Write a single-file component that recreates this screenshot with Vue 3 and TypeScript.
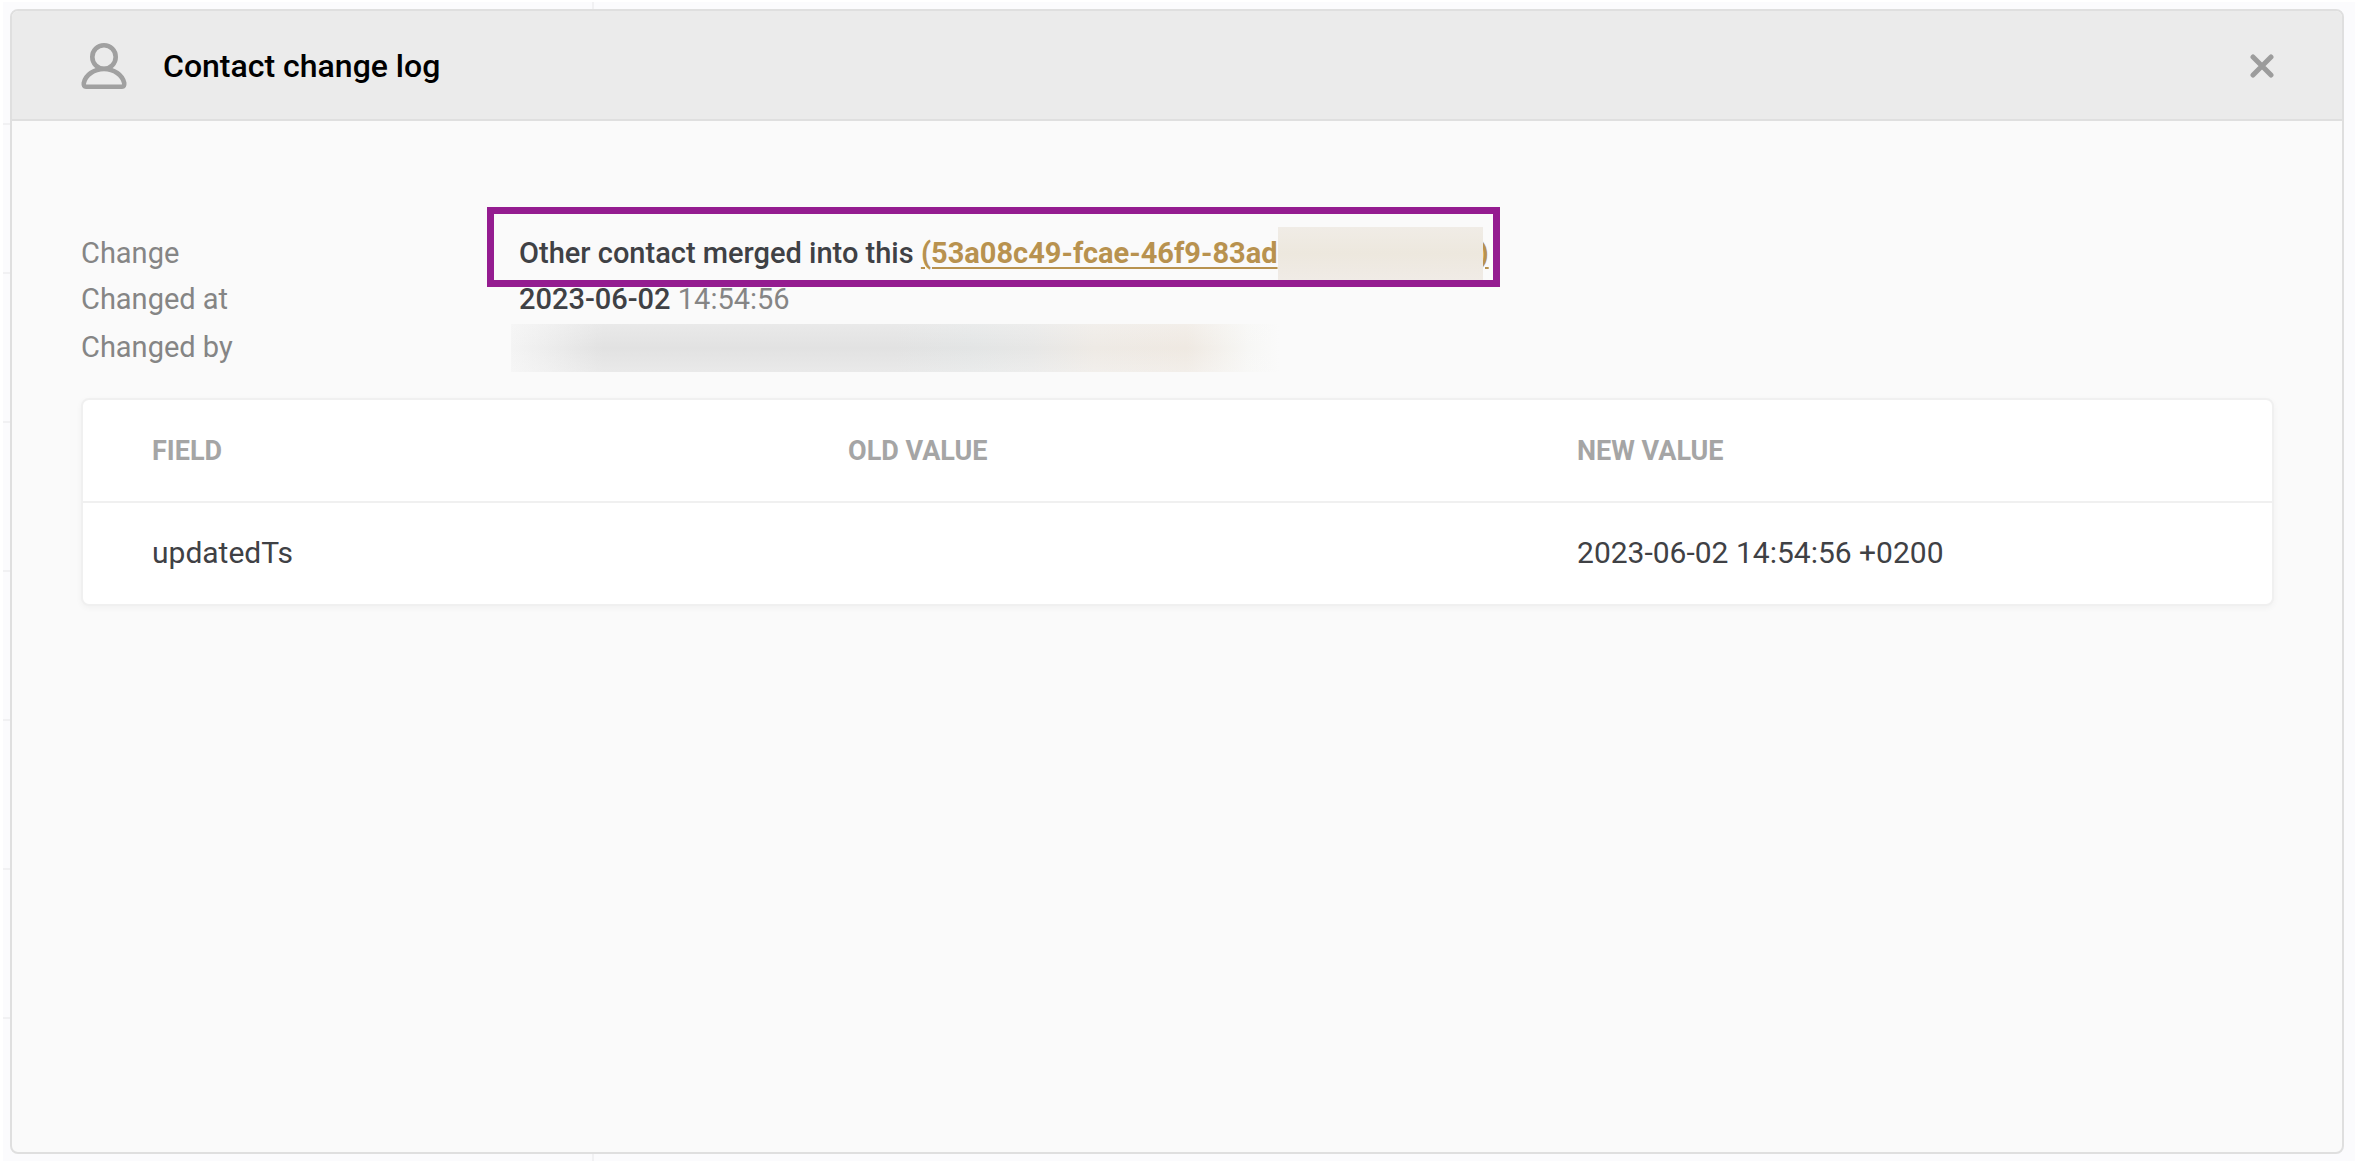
<script setup lang="ts">
interface ChangedField {
  field: string
  oldValue: string
  newValue: string
}

const columns: string[] = ['Field', 'Old value', 'New value']

const changes: ChangedField[] = [
  { field: 'updatedTs', oldValue: '', newValue: '2023-06-02 14:54:56 +0200' },
]
</script>

<template>
  <div class="page">
    <section class="dialog" role="dialog" aria-labelledby="dialog-title">
      <header class="dialog-header">
        <svg class="user-icon" viewBox="0 0 46 46" aria-hidden="true">
          <ellipse cx="23" cy="14" rx="11.7" ry="11.7" />
          <path d="M5 43.7H41Q43.6 43.7 43.2 40C41.5 32 33 26 23 26S4.500 32 2.800 40Q2.400 43.700 5 43.700Z" />
        </svg>
        <h1 id="dialog-title" class="title">Contact change log</h1>
        <button class="close" type="button" aria-label="Close">
          <svg class="close-icon" viewBox="0 0 24 24" aria-hidden="true">
            <path d="M3 3L21 21M21 3L3 21" />
          </svg>
        </button>
      </header>

      <div class="dialog-body">
        <dl class="summary">
          <dt>Change</dt>
          <dd>
            <span class="highlighted">
              <strong>Other contact merged into this </strong>
              <a class="contact-link" href="#">(53a08c49-fcae-46f9-83ad<span class="redacted-id"></span>)</a>
            </span>
          </dd>
          <dt>Changed at</dt>
          <dd><strong>2023-06-02</strong> <span class="time">14:54:56</span></dd>
          <dt>Changed by</dt>
          <dd><span class="redacted-user"></span></dd>
        </dl>

        <div class="card">
          <table class="changes">
            <thead>
              <tr>
                <th v-for="column in columns" :key="column" scope="col">{{ column }}</th>
              </tr>
            </thead>
            <tbody>
              <tr v-for="change in changes" :key="change.field">
                <td>{{ change.field }}</td>
                <td>{{ change.oldValue }}</td>
                <td>{{ change.newValue }}</td>
              </tr>
            </tbody>
          </table>
        </div>
      </div>
    </section>
  </div>
</template>

<style>
body {
  margin: 0;
  background: #fff;
}
</style>

<style scoped>
.page {
  box-sizing: border-box;
  display: flex;
  min-height: 100vh;
  padding: 7px 11px 7px 7px;
  border: solid #fff;
  border-width: 2px 0 3px 3px;
  background:
    linear-gradient(#f1f1f3, #f1f1f3) 589px 0 / 2px 100% no-repeat,
    repeating-linear-gradient(transparent 0 121px, #f1f1f3 121px 123px, transparent 123px 149px) 0 0 / 50% 100% no-repeat,
    #fbfbfd;
  font-family: Roboto, 'Liberation Sans', sans-serif;
  font-size: 29px;
  color: #3f4145;
}

.dialog {
  flex: 1;
  display: flex;
  flex-direction: column;
  border: 2px solid #dfdfdf;
  border-radius: 8px;
  background: #fafafa;
  overflow: hidden;
}

.dialog-header {
  box-sizing: border-box;
  display: flex;
  align-items: center;
  height: 110px;
  padding: 2px 68px 0 69px;
  border-bottom: 2px solid #dfdfdf;
  background: #ebebeb;
}

.user-icon {
  width: 46px;
  height: 46px;
  fill: none;
  stroke: #a0a0a0;
  stroke-width: 4.6;
}

.title {
  flex: 1;
  margin: 0 0 0 36px;
  font-size: 32px;
  font-weight: 500;
  color: #000;
}

.close {
  display: flex;
  padding: 0;
  border: 0;
  background: none;
  cursor: pointer;
}

.close-icon {
  width: 24px;
  height: 24px;
  fill: none;
  stroke: #9c9c9c;
  stroke-width: 5;
  stroke-linecap: round;
}

.dialog-body {
  padding: 109px 68px 40px 69px;
}

.summary {
  display: grid;
  grid-template-columns: 438px 1fr;
  grid-template-rows: 46px 48px 48px;
  margin: 0 0 26px;
  line-height: 47px;
  color: #858585;
}

.summary dd {
  margin: 0;
}

.summary strong {
  font-weight: 500;
  color: #3f4145;
}

.highlighted {
  position: relative;
  display: inline-block;
  white-space: nowrap;
}

.highlighted::after {
  content: '';
  position: absolute;
  inset: -23px -11px -10px -32px;
  border: 7px solid #941c90;
}

.contact-link {
  font-weight: 700;
  color: #b8924f;
  text-decoration: underline;
  text-decoration-thickness: 2px;
  text-underline-offset: 4px;
}

.redacted-id {
  position: relative;
  display: inline-block;
  width: 201px;
}

.redacted-id::after {
  content: '';
  position: absolute;
  top: -36px;
  left: 0;
  width: 205px;
  height: 53px;
  background: linear-gradient(#f0ece6, #ede8de 50%, #f0ebe6);
}

.redacted-user {
  display: block;
  width: 768px;
  height: 48px;
  margin-left: -8px;
  background:
    linear-gradient(rgb(250 250 250 / 30%), transparent 50%, rgb(250 250 250 / 30%)),
    linear-gradient(90deg, #f4f4f4, #e2e2e2 12%, #e2e2e2 50%, #e3e5e5 60%, #e7e7e6 68%, #eeeae5 76%, #efe9e2 88%, #f7f7f5 96%, #fafafa);
}

.card {
  border: 2px solid #f0f0f0;
  border-radius: 8px;
  background: #fff;
  box-shadow: 0 2px 6px rgb(0 0 0 / 4%);
}

.changes {
  width: 100%;
  table-layout: fixed;
  border-collapse: collapse;
}

.changes th,
.changes td {
  box-sizing: border-box;
  height: 102px;
  padding: 0 69px;
  text-align: left;
}

.changes th {
  border-bottom: 2px solid #f0f0f0;
  font-size: 27px;
  font-weight: 700;
  text-transform: uppercase;
  color: #a5a5a5;
}

.changes td {
  padding-bottom: 2px;
  font-size: 30px;
}

.changes th:nth-child(1) {
  width: 31.8%;
}

.changes th:nth-child(2) {
  width: 33.3%;
}
</style>
